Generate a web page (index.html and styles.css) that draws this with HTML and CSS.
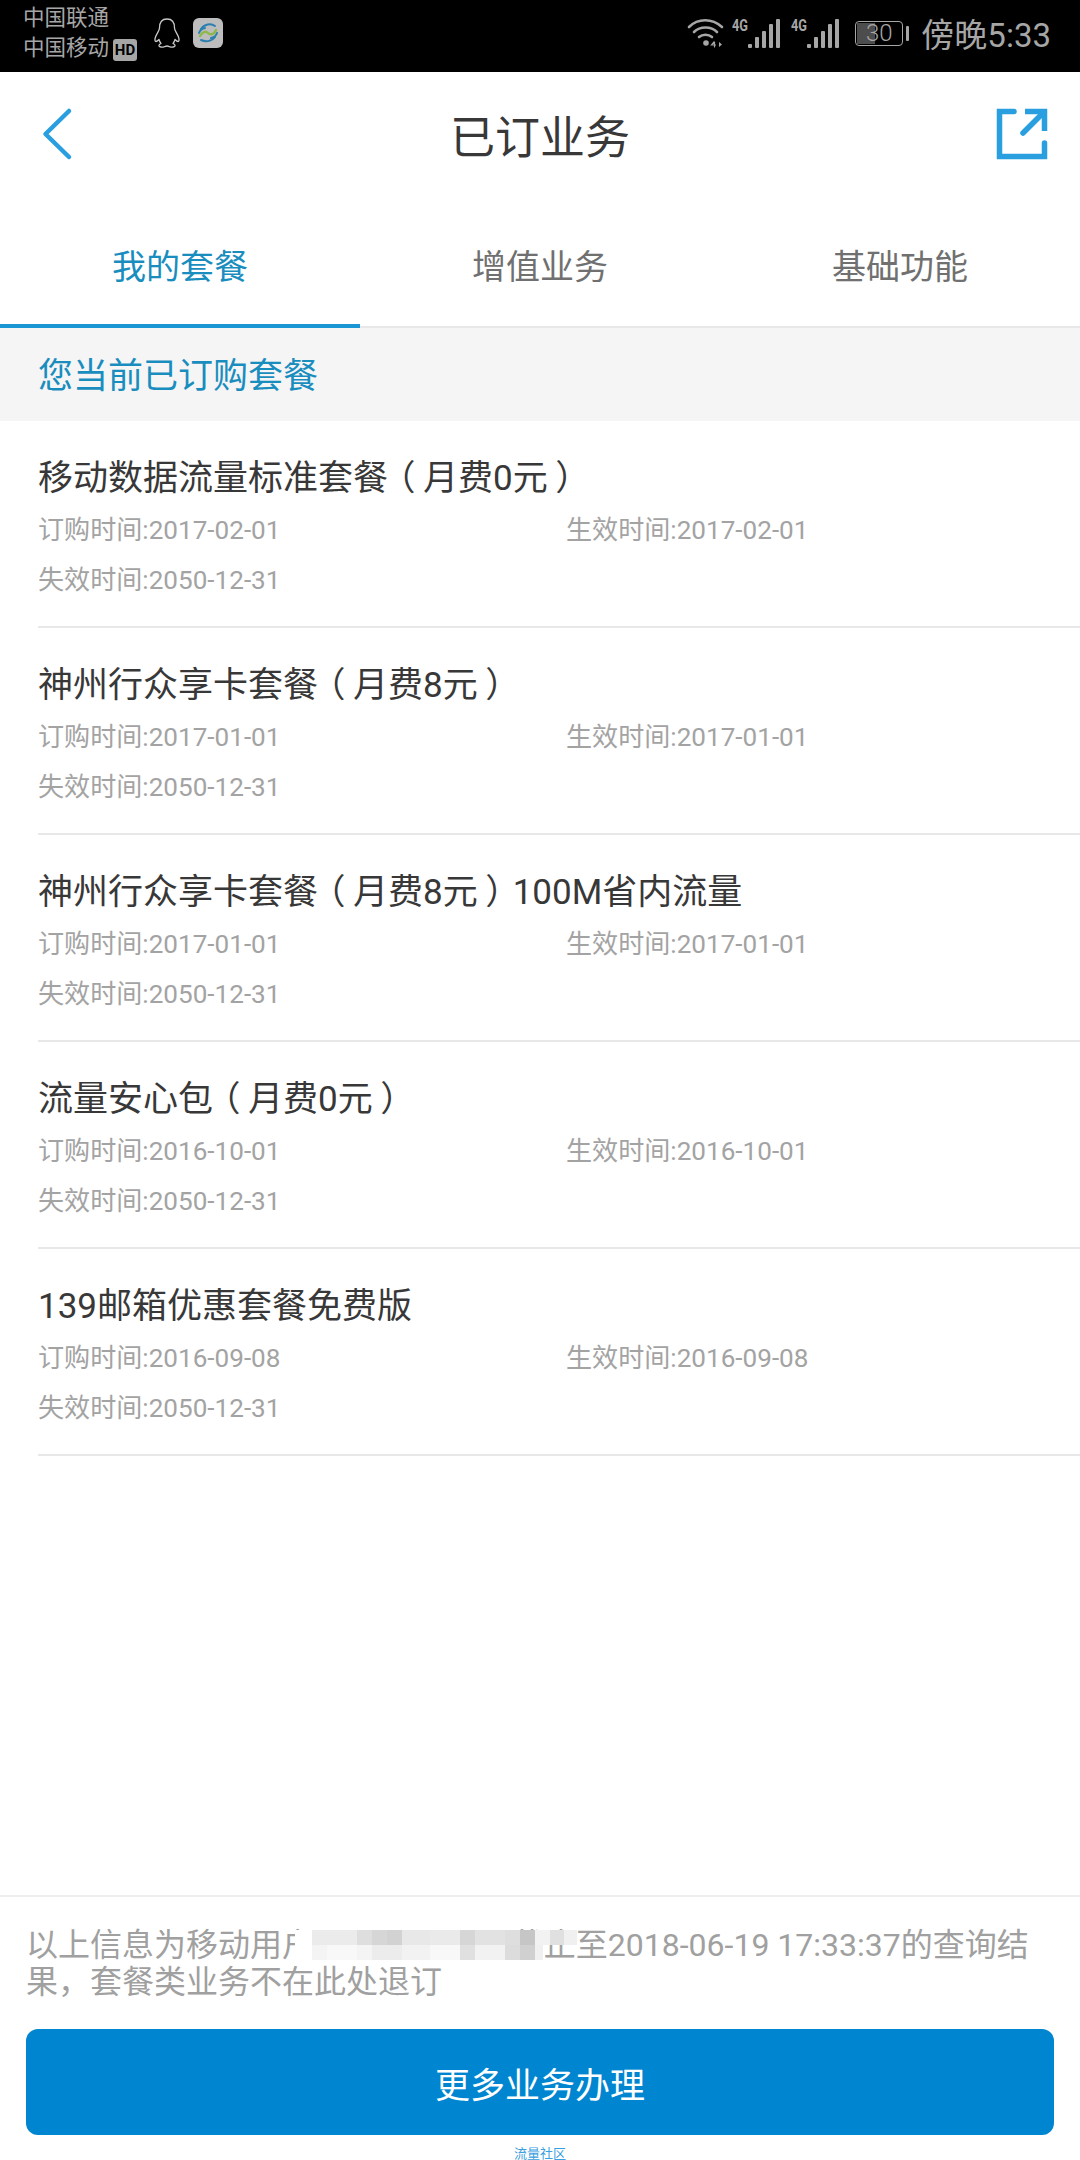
FILE: index.html
```html
<!DOCTYPE html>
<html lang="zh-CN">
<head>
  <meta charset="UTF-8">
  <meta name="viewport" content="width=device-width, initial-scale=1.0">
  <title>已订业务</title>
  <link rel="stylesheet" href="styles.css">
</head>
<body>
  <div class="page">
    <!-- Status bar -->
    <div class="status-bar">
      <div class="status-left">
        <div class="carriers">
          <div>中国联通</div>
          <div>中国移动<span class="hd">HD</span></div>
        </div>
        <svg class="qq-icon" width="26" height="30" viewBox="0 0 26 30" fill="none" stroke="#c8c8c8" stroke-width="1.3" stroke-linejoin="round">
          <path d="M13 1C7.500 1 5.500 5 5.500 10C5.500 12.500 3 15 1.500 19C.5 22 1 23.500 2 23.500C3 23.500 4 22.500 5 21.500C5.500 23.500 6 24.500 7 25.500C4.500 26.500 4 28.500 7 29C9.500 29.500 11 28 13 28C15 28 16.500 29.500 19 29C22 28.500 21.500 26.500 19 25.500C20 24.500 20.500 23.500 21 21.500C22 22.500 23 23.500 24 23.500C25 23.500 25.500 22 24.500 19C23 15 20.500 12.500 20.500 10C20.500 5 18.500 1 13 1Z"/>
        </svg>
        <div class="app-badge">
          <svg width="24" height="24" viewBox="0 0 24 24" fill="none" stroke-width="2" stroke-linecap="round">
            <path d="M5 8c3-5 10-6 14-3" stroke="#2a7fb0"/>
            <path d="M3 12c1-3 3-4.500 6-5" stroke="#2a7fb0"/>
            <path d="M4 15c3-5 6-5 8-3s6 2 8-3" stroke="#8fb84a" stroke-width="2.400"/>
            <path d="M21 12c-1 3-3 4.500-6 5" stroke="#2a7fb0"/>
            <path d="M5 19c4 2 10 2 14-3" stroke="#2a7fb0"/>
          </svg>
        </div>
      </div>
      <div class="status-right">
        <svg class="wifi-icon" width="38" height="32" viewBox="0 0 38 32" fill="none" stroke="#a6a6a6" stroke-width="2.600" stroke-linecap="round">
          <path d="M2 10c9-9 23-9 33 0"/>
          <path d="M7 15c6-6 17-6 23 0"/>
          <path d="M12 20c3.500-3 9.500-3 13 0"/>
          <circle cx="19" cy="26" r="2.800" fill="#a6a6a6" stroke="none"/>
          <path d="M27 25l-2.500 3h4M27.500 25v5" stroke-width="1.200"/>
          <path d="M32 25v5l3-2.500z" fill="#a6a6a6" stroke="none"/>
        </svg>
        <div class="signal">
          <span class="net">4G</span>
          <i class="bar b0"></i><i class="bar b1"></i><i class="bar b2"></i><i class="bar b3"></i><i class="bar b4"></i>
        </div>
        <div class="signal">
          <span class="net">4G</span>
          <i class="bar b0"></i><i class="bar b1"></i><i class="bar b2"></i><i class="bar b3"></i><i class="bar b4"></i>
        </div>
        <div class="battery">
          <div class="battery-body"><span class="battery-fill"></span><span class="battery-num">30</span></div>
          <span class="battery-cap"></span>
        </div>
        <span class="clock">傍晚5:33</span>
      </div>
    </div>

    <!-- Header -->
    <div class="header">
      <svg class="back-icon" width="32" height="56" viewBox="0 0 32 56" fill="none" stroke="#2a9fe0" stroke-width="4.500" stroke-linecap="round" stroke-linejoin="round">
        <path d="M27 5L3.500 28L27 51"/>
      </svg>
      <h1 class="title">已订业务</h1>
      <svg class="share-icon" width="52" height="52" viewBox="0 0 52 52" fill="none" stroke="#2a9fe0" stroke-width="5.500" stroke-linecap="round">
        <path d="M18 3.500H3.500v45h45V35"/>
        <path d="M29 3.500h19.500V23" stroke-linecap="butt"/>
        <path d="M46 6L27 25"/>
      </svg>
    </div>

    <!-- Tabs -->
    <div class="tabs">
      <div class="tab active">我的套餐</div>
      <div class="tab">增值业务</div>
      <div class="tab">基础功能</div>
    </div>

    <div class="section-title">您当前已订购套餐</div>

    <!-- Plan list -->
    <div class="plan-list">
      <div class="plan">
        <div class="plan-name">移动数据流量标准套餐<span class="paren">（</span>月费0元<span class="paren">）</span></div>
        <div class="plan-dates"><span>订购时间:2017-02-01</span><span>生效时间:2017-02-01</span><span>失效时间:2050-12-31</span></div>
      </div>
      <div class="plan">
        <div class="plan-name">神州行众享卡套餐<span class="paren">（</span>月费8元<span class="paren">）</span></div>
        <div class="plan-dates"><span>订购时间:2017-01-01</span><span>生效时间:2017-01-01</span><span>失效时间:2050-12-31</span></div>
      </div>
      <div class="plan">
        <div class="plan-name">神州行众享卡套餐<span class="paren">（</span>月费8元<span class="paren">）</span>100M省内流量</div>
        <div class="plan-dates"><span>订购时间:2017-01-01</span><span>生效时间:2017-01-01</span><span>失效时间:2050-12-31</span></div>
      </div>
      <div class="plan">
        <div class="plan-name">流量安心包<span class="paren">（</span>月费0元<span class="paren">）</span></div>
        <div class="plan-dates"><span>订购时间:2016-10-01</span><span>生效时间:2016-10-01</span><span>失效时间:2050-12-31</span></div>
      </div>
      <div class="plan">
        <div class="plan-name">139邮箱优惠套餐免费版</div>
        <div class="plan-dates"><span>订购时间:2016-09-08</span><span>生效时间:2016-09-08</span><span>失效时间:2050-12-31</span></div>
      </div>
    </div>

    <!-- Footer -->
    <div class="footer">
      <div class="notice">
        以上信息为移动用户00000000000截止至2018-06-19 17:33:37的查询结果，套餐类业务不在此处退订
        <div class="mosaic"></div>
      </div>
      <button class="more-btn">更多业务办理</button>
      <div class="watermark">流量社区</div>
    </div>
  </div>
</body>
</html>
```

FILE: styles.css
```css
* {
  box-sizing: border-box;
}

body {
  margin: 0;
  font-family: Roboto, "Noto Sans CJK SC", sans-serif;
  background-color: #fff;
}

.page {
  width: 1080px;
  height: 2160px;
  display: flex;
  flex-direction: column;
  overflow: hidden;
}

/* Status bar */
.status-bar {
  height: 72px;
  background-color: #000;
  display: flex;
  justify-content: space-between;
  align-items: center;
  padding: 0 29px 6px 23px;
  color: #a6a6a6;
}

.status-left {
  display: flex;
  align-items: center;
}

.carriers {
  font-size: 21.500px;
  line-height: 30px;
  width: 131px;
}

.hd {
  display: inline-block;
  width: 24px;
  height: 22px;
  margin-left: 4px;
  background-color: #a6a6a6;
  border-radius: 3px;
  color: #000;
  font-size: 15px;
  line-height: 22px;
  font-weight: 700;
  text-align: center;
}

.app-badge {
  width: 30px;
  height: 30px;
  margin-left: 13px;
  border-radius: 6px;
  background-color: #bdbdbd;
  display: flex;
  align-items: center;
  justify-content: center;
}

.status-right {
  display: flex;
  align-items: center;
}

.wifi-icon {
  margin-right: 7px;
}

.signal {
  width: 48px;
  height: 30px;
  margin-right: 11px;
  padding-left: 16px;
  display: flex;
  align-items: flex-end;
  gap: 3px;
  position: relative;
}

.net {
  position: absolute;
  left: 0;
  top: -3px;
  font-size: 17px;
  font-weight: 700;
  transform: scaleX(0.75);
  transform-origin: left;
}

.bar {
  display: block;
  width: 4px;
  background-color: #a6a6a6;
  border-radius: 1px;
}

.b0 { height: 4px; }
.b1 { height: 11px; }
.b2 { height: 17px; }
.b3 { height: 24px; }
.b4 { height: 29px; }

.battery {
  display: flex;
  align-items: center;
  gap: 3px;
  margin-left: 5px;
  margin-right: 12px;
}

.battery-body {
  width: 48px;
  height: 25px;
  border: 1.500px solid #a6a6a6;
  border-radius: 4px;
  position: relative;
  display: flex;
  align-items: center;
  justify-content: center;
  font-size: 24px;
  font-weight: 300;
  line-height: 22px;
}

.battery-fill {
  position: absolute;
  left: 1px;
  top: 1px;
  bottom: 1px;
  width: 18px;
  background-color: #4d4d4d;
}

.battery-num {
  position: relative;
}

.battery-cap {
  width: 3px;
  height: 15px;
  background-color: #a6a6a6;
  border-radius: 1px;
}

.clock {
  font-size: 33px;
}

/* Header */
.header {
  height: 138px;
  display: flex;
  align-items: center;
  justify-content: space-between;
  position: relative;
  padding: 0 32px 14px 42px;
}

.title {
  position: absolute;
  left: 0;
  right: 0;
  margin: 0;
  font-size: 45px;
  font-weight: 400;
  color: #383838;
  text-align: center;
}

/* Tabs */
.tabs {
  height: 118px;
  display: flex;
  border-bottom: 2px solid #e8e8e8;
}

.tab {
  width: 360px;
  margin-bottom: -2px;
  padding-top: 32px;
  font-size: 34px;
  line-height: 50px;
  color: #707070;
  text-align: center;
}

.tab.active {
  color: #1a8dbf;
  border-bottom: 4px solid #1a96d4;
}

.section-title {
  height: 93px;
  padding-left: 38px;
  background-color: #f5f5f5;
  color: #1a8dbf;
  font-size: 35px;
  line-height: 97px;
}

/* Plan list */
.plan-list {
  flex: 1;
}

.plan {
  height: 207px;
  margin-left: 38px;
  padding-top: 33px;
  border-bottom: 2px solid #e8e8e8;
}

.plan-name {
  font-size: 35px;
  line-height: 50px;
  color: #383838;
}

/* trim the full-width bracket, then center it in its cell */
.paren {
  display: inline-block;
  width: 1em;
  text-align: center;
  font-feature-settings: "palt";
}

.plan-dates {
  display: grid;
  grid-template-columns: 528px 1fr;
  margin-top: 1px;
  font-size: 26.100px;
  line-height: 50px;
  color: #a3a3a3;
}

/* Footer */
.footer {
  height: 265px;
  flex-shrink: 0;
  border-top: 2px solid #eee;
  padding: 30px 26px 0 26px;
  position: relative;
}

.notice {
  position: relative;
  font-size: 32px;
  line-height: 37px;
  color: #a0a0a0;
}

/* blurred-out phone number */
.mosaic {
  position: absolute;
  left: 269px;
  top: 3px;
  width: 282px;
  height: 30px;
  background-repeat: no-repeat;
  background-size: 282px 15px;
  background-position: 0 0, 0 15px;
  background-image:
    linear-gradient(90deg, #fff 0 17px, #ebebeb 17px 62px, #dedede 62px 77px, #d6d6d6 77px 92px, #d2d2d2 92px 107px, #e8e8e8 107px 135px, #eaeaea 135px 165px, #d6d6d6 165px 180px, #e2e2e2 180px 210px, #dedede 210px 225px, #c6c6c6 225px 240px, #f2f2f2 240px 255px, #e0e0e0 255px 269px, #f0f0f0 269px 282px),
    linear-gradient(90deg, #fff 0 17px, #f4f4f4 17px 32px, #f8f8f8 32px 62px, #f4f4f4 62px 77px, #ececec 77px 107px, #f2f2f2 107px 135px, #f8f8f8 135px 165px, #e0e0e0 165px 180px, #f2f2f2 180px 210px, #dcdcdc 210px 225px, #d0d0d0 225px 240px, #f0f0f0 240px 248px, transparent 248px);
}

.more-btn {
  display: block;
  width: 1028px;
  height: 106px;
  margin: 28px 0 0 0;
  border: none;
  border-radius: 12px;
  background-color: #0085d0;
  color: #fff;
  font-family: inherit;
  font-size: 35px;
}

.watermark {
  margin-top: 11px;
  font-size: 13px;
  line-height: 16px;
  color: #3aa0e0;
  text-align: center;
}
```
